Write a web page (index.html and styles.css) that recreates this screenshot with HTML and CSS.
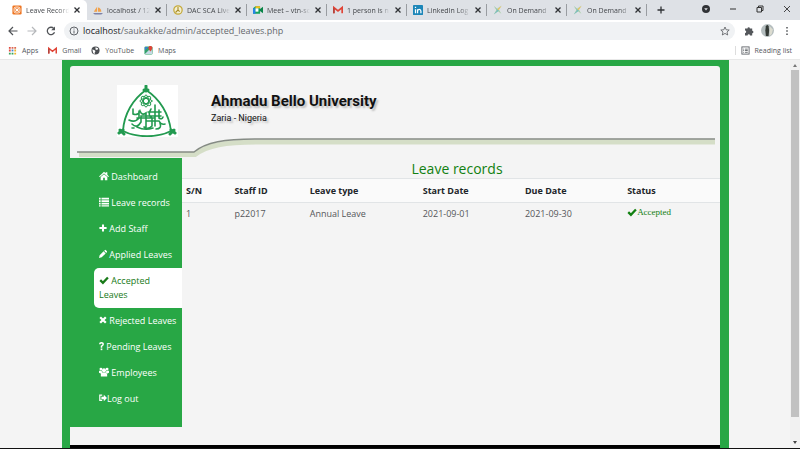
FILE: index.html
```html
<!DOCTYPE html>
<html lang="en">
<head>
<meta charset="utf-8">
<meta name="viewport" content="width=device-width, initial-scale=1">
<title>Leave Records</title>
<link rel="stylesheet" href="styles.css">
</head>
<body>
<svg class="defs" aria-hidden="true">
  <symbol id="x" viewBox="0 0 8 8"><path d="M1.500 1.500l5 5M6.500 1.500l-5 5" stroke="currentColor" stroke-width="1.300"/></symbol>
  <symbol id="check" viewBox="0 0 12 12"><path d="M1.500 6.200l3.200 3.200L10.700 3" fill="none" stroke="currentColor" stroke-width="2.700"/></symbol>
  <symbol id="gmail" viewBox="0 0 12 12"><path d="M1 10V3l5 4 5-4v7" fill="none" stroke="#e04436" stroke-width="2"/><path d="M1 4v6" stroke="#b4433c" stroke-width="2"/></symbol>
  <symbol id="star4" viewBox="0 0 12 12"><path d="M1 1l4 3.500 5-4-3 5 3 5-4-3-5 4 3-5.500z" fill="#a9cda5"/><path d="M5 5L10.500 1 7 6z" fill="#efc75e"/><path d="M1 2l4 4-4 5 6-4z" fill="#76bcc2"/></symbol>
</svg>
<div class="window">
  <header class="tabs">
    <div class="tab active"><svg class="fav" viewBox="0 0 12 12"><rect x=".5" y=".5" width="11" height="11" rx="1.500" fill="#ee7623"/><path d="M4 4l4 4M8 4L4 8" stroke="#fff" stroke-width="1.500"/><rect x="2.500" y="2.500" width="7" height="7" rx="2" fill="none" stroke="#fff"/></svg><span class="name">Leave Record</span><button aria-label="Close tab"><svg><use href="#x"/></svg></button></div>
    <div class="tab"><svg class="fav" viewBox="0 0 12 12"><path d="M1 8c1-2 3-5 4-6v6zM6 8V3c2 0 4 2 4 5z" fill="#f1a14a"/><path d="M0 9.500h12l-2 2H2z" fill="#7e83a8"/></svg><span class="name">localhost / 12</span><button aria-label="Close tab"><svg><use href="#x"/></svg></button></div>
    <div class="tab"><svg class="fav" viewBox="0 0 12 12"><circle cx="6" cy="6" r="5" fill="#f4efcf" stroke="#c4a93b" stroke-width="1.500"/><path d="M6 2.500V6l-3 3M6 6l2 2" fill="none" stroke="#a98c28" stroke-width="1.300"/></svg><span class="name">DAC SCA Live</span><button aria-label="Close tab"><svg><use href="#x"/></svg></button></div>
    <div class="tab"><svg class="fav" viewBox="0 0 12 12"><path d="M0 4l3-2.500h5.500v9H0z" fill="#15a35c"/><path d="M3 1.500h5.500V4H3z" fill="#f8bc17"/><path d="M0 4h3v6.500H0z" fill="#2684e8"/><path d="M3 4h3.500v4H3z" fill="#fff"/><path d="M8 5l4-3v8L8 7z" fill="#0a8548"/></svg><span class="name">Meet – vtn-sc</span><button aria-label="Close tab"><svg><use href="#x"/></svg></button></div>
    <div class="tab"><svg class="fav"><use href="#gmail"/></svg><span class="name">1 person is n</span><button aria-label="Close tab"><svg><use href="#x"/></svg></button></div>
    <div class="tab"><svg class="fav" viewBox="0 0 12 12"><rect width="12" height="12" rx="1" fill="#1c86b8"/><path d="M3 5v5M5.500 10V5M5.500 7.500c0-3 4-3 4 0V10M3 2v1.500" fill="none" stroke="#fff" stroke-width="1.500"/></svg><span class="name">LinkedIn Log</span><button aria-label="Close tab"><svg><use href="#x"/></svg></button></div>
    <div class="tab"><svg class="fav"><use href="#star4"/></svg><span class="name">On Demand</span><button aria-label="Close tab"><svg><use href="#x"/></svg></button></div>
    <div class="tab"><svg class="fav"><use href="#star4"/></svg><span class="name">On Demand</span><button aria-label="Close tab"><svg><use href="#x"/></svg></button></div>
    <button class="new-tab" aria-label="New tab"><svg viewBox="0 0 8 8"><path d="M4 .5v7M.5 4h7" stroke="currentColor" stroke-width="1.300"/></svg></button>
    <div class="controls">
      <button aria-label="Search tabs"><svg viewBox="0 0 8 8"><circle cx="4" cy="4" r="4" fill="#303236"/><path d="M2.200 3.200h3.600L4 5.500z" fill="#dee1e6"/></svg></button>
      <button aria-label="Minimise"><svg viewBox="0 0 8 8"><path d="M1 4h6" stroke="#333" stroke-width="1"/></svg></button>
      <button aria-label="Restore"><svg viewBox="0 0 8 8"><path d="M1 2.500h4.500V7H1zM2.500 2.500V1H7v4.500H5.500" fill="none" stroke="#333"/></svg></button>
      <button aria-label="Close"><svg viewBox="0 0 8 8"><path d="M1 1l6 6M7 1L1 7" stroke="#333" stroke-width=".9"/></svg></button>
    </div>
  </header>
  <div class="toolbar">
    <button aria-label="Back"><svg viewBox="0 0 10 10"><path d="M9.500 5h-8M5 1L1 5l4 4" fill="none" stroke="#505357" stroke-width="1.200"/></svg></button>
    <button aria-label="Forward"><svg viewBox="0 0 10 10"><path d="M.5 5h8M5 1l4 4-4 4" fill="none" stroke="#b6b8bb" stroke-width="1.200"/></svg></button>
    <button aria-label="Reload"><svg viewBox="0 0 10 10"><path d="M8.500 6.200A3.700 3.700 0 1 1 7.700 2.400" fill="none" stroke="#505357" stroke-width="1.300"/><path d="M9 .5v3.800H5.200z" fill="#505357"/></svg></button>
    <div class="address"><svg viewBox="0 0 10 10"><circle cx="5" cy="5" r="4" fill="none" stroke="#5f6368"/><path d="M5 4.500v3M5 2.500v1" stroke="#5f6368"/></svg><span class="url"><b>localhost</b>/saukakke/admin/accepted_leaves.php</span><svg viewBox="0 0 10 10"><path d="M5 1l1.200 2.800 3 .2L7 6l.7 3L5 7.400 2.300 9 3 6 .8 4l3-.2z" fill="none" stroke="#55585c" stroke-width=".8"/></svg></div>
    <button aria-label="Extensions"><svg viewBox="0 0 10 10"><path d="M1 2.500h2.500a1.200 1.200 0 1 1 2.400 0h2.300v2.300a1.200 1.200 0 1 1 0 2.400V9.500H6a1.200 1.200 0 1 0-2.400 0H1V7a1.200 1.200 0 1 0 0-2.400z" fill="#55585c"/></svg></button>
    <button class="avatar" aria-label="Profile"><svg viewBox="0 0 12 12"><circle cx="6" cy="6" r="6" fill="#b5bebf"/><path d="M4.500 2q1.500-2 2.500 0l.5 4-.5 5H4.500L4 6z" fill="#343a35"/><path d="M8 2l3 3-1 4-2 2z" fill="#dcdcd0"/></svg></button>
    <button aria-label="Menu"><svg viewBox="0 0 10 10"><path d="M5 1v1.600M5 4.200v1.600M5 7.400V9" stroke="#505357" stroke-width="1.500"/></svg></button>
  </div>
  <nav class="bookmarks" aria-label="Bookmarks">
    <a href="#"><svg viewBox="0 0 10 10"><path d="M1 2h2M1 5h2" stroke="#e1493d" stroke-width="2"/><path d="M4 2h2M7 2h2" stroke="#db6951" stroke-width="2"/><path d="M4 5h2" stroke="#4285d4" stroke-width="2"/><path d="M7 5h2M7 8.500h2" stroke="#f0b52d" stroke-width="2"/><path d="M1 8.500h2M4 8.500h2" stroke="#36a35b" stroke-width="2"/></svg>Apps</a>
    <a href="#"><svg><use href="#gmail"/></svg>Gmail</a>
    <a href="#"><svg viewBox="0 0 10 10"><circle cx="5" cy="5" r="4.500" fill="#4b4e52"/><path d="M1.500 4l2 .5 1.500 1-1 2 .5 1.500-2-1zM5 1.500l3 1-1 2-2-.5z" fill="#fff"/></svg>YouTube</a>
    <a href="#"><svg viewBox="0 0 10 10"><rect x=".5" y=".5" width="9" height="9" rx="1.500" fill="#35a16b"/><path d="M1 9l7-7 1.500 7z" fill="#c6d9e5"/><path d="M1 1h4L1 5z" fill="#3b7fd0"/><path d="M7 6C3.500 2 5 0 7 0s4 2 0 6" fill="#de4336"/></svg>Maps</a>
    <a class="reading" href="#"><svg viewBox="0 0 10 10"><rect x="1" y="1" width="8" height="8" fill="none" stroke="#5f6368"/><path d="M2.500 3.500h1M4.500 3.500h3M2.500 5h1M4.500 5h3M2.500 7h1M4.500 7h3" stroke="#5f6368"/></svg>Reading list</a>
  </nav>
  <div class="viewport">
    <main class="container">
      <div class="panel">
        <section class="banner">
          <svg class="swoosh" viewBox="0 0 650 92" preserveAspectRatio="none" aria-hidden="true">
            <path d="M9 88.500H125C137 79 156 76 186 76H645" fill="none" stroke="#d5dec7" stroke-width="5"/>
            <path d="M7 86H124C136 76 155 73 185 73H645" fill="none" stroke="#858b84" stroke-width="1.500"/>
          </svg>
          <svg class="crest" viewBox="0 0 61 52" role="img" aria-label="University crest">
            <g fill="none" stroke="#239a50" stroke-linecap="round">
              <path d="M29 5C16 14 7 29 6 46C20 53 40 53 54 46C52 29 43 14 29 5Z" stroke-width="1.800"/>
              <path d="M29 1v5M27 5h4M2 48l4-3M3 45l4 4M58 48l-4-3M57 45l-4 4" stroke-width="3"/>
              <g stroke-width="1"><ellipse cx="29" cy="16" rx="6" ry="2.500"/><ellipse cx="29" cy="16" rx="2.500" ry="6"/><ellipse cx="29" cy="16" rx="6" ry="2.500" transform="rotate(45 29 16)"/><ellipse cx="29" cy="16" rx="6" ry="2.500" transform="rotate(-45 29 16)"/></g>
              <path d="M16 24v5q5 2 7-3 2 5 6 2v14M12 35q6 3 10-2V26M15 39q5 5 9-2v-6h20M34 24q-4 6 1 9v8q-4 4-8 1M38 20v21M42 25v8q3 2 4-1M30 36h12q2 4 6 3M43 38q2 6-4 6M15 43h2M20 42q8 4 16 1M31 27h13M20 33h18" stroke-width="1.600"/>
            </g>
          </svg>
          <div class="brand"><h1>Ahmadu Bello University</h1><p>Zaria - Nigeria</p></div>
        </section>
        <div class="body">
          <nav class="side" aria-label="Main">
            <a href="#"><svg viewBox="0 0 12 12"><path d="M0 6.500L6 1l2 1.800V1.500h2v3L12 6.500l-1 .8L6 3 1 7.300z"/><path d="M2 7.300L6 4l4 3.300V11H7V8H5v3H2z"/></svg> Dashboard</a>
            <a href="#"><svg viewBox="0 0 12 12"><path d="M0 1h2v2H0zM3 1h9v2H3zM0 4h2v2H0zM3 4h9v2H3zM0 7h2v2H0zM3 7h9v2H3zM0 10h2v1.500H0zM3 10h9v1.500H3z"/></svg> Leave records</a>
            <a href="#"><svg class="slim" viewBox="0 0 10 12"><path d="M3.700 1.500h2.600v3.200h3.200v2.600H6.300v3.200H3.700V7.300H.5V4.700h3.200z"/></svg> Add Staff</a>
            <a href="#"><svg class="slim" viewBox="0 0 10 12"><path d="M0 11l.8-3.500L5.700 2.700l2.600 2.600-4.900 4.900zM6.400 2L8 .6 10.400 3 9 4.600z"/></svg> Applied Leaves</a>
            <a class="current" href="#" aria-current="page"><svg><use href="#check"/></svg> Accepted Leaves</a>
            <a href="#"><svg class="slim" viewBox="0 0 10 12"><path d="M1.500 2.500l7 7M8.500 2.500l-7 7" stroke="currentColor" stroke-width="2.800"/></svg> Rejected Leaves</a>
            <a href="#"><svg class="mini" viewBox="0 0 6 12"><path d="M1 4q0-2 2-2t2 1.800Q5 5 3 6.200V8" fill="none" stroke="currentColor" stroke-width="1.800"/><path d="M2 9h2v2H2z"/></svg> Pending Leaves</a>
            <a href="#"><svg viewBox="0 0 12 12"><circle cx="6" cy="4" r="2.500"/><circle cx="2.300" cy="2.500" r="1.700"/><circle cx="9.700" cy="2.500" r="1.700"/><path d="M0 7V4.500h3L4 6.500 2.500 8zM12 7V4.500H9L8 6.500 9.500 8zM2.200 11.500V9q0-2.500 2-2.500h3.600q2 0 2 2.500v2.500z"/></svg> Employees</a>
            <a href="#"><svg class="slim" viewBox="0 0 10 12"><path d="M4 2.500H1V9h3" fill="none" stroke="currentColor" stroke-width="1.500"/><path d="M3 4.500h3V2l4 4-4 4V7.500H3z"/></svg>Log out</a>
          </nav>
          <section class="content">
            <h2>Leave records</h2>
            <table>
              <thead><tr><th class="sn">S/N</th><th class="id">Staff ID</th><th class="type">Leave type</th><th class="date">Start Date</th><th class="date">Due Date</th><th>Status</th></tr></thead>
              <tbody><tr><td>1</td><td>p22017</td><td>Annual Leave</td><td>2021-09-01</td><td>2021-09-30</td><td class="status"><svg><use href="#check"/></svg>Accepted</td></tr></tbody>
            </table>
          </section>
        </div>
        <footer></footer>
      </div>
    </main>
    <div class="scroll" aria-hidden="true"><span class="up"></span><span class="thumb"></span><span class="down"></span></div>
  </div>
</div>
</body>
</html>
```
FILE: styles.css
```css
* { box-sizing: border-box; }
body { margin: 0; font-family: "Open Sans", "Noto Sans", sans-serif; font-size: 9px; color: #212529; background: #f4f4f4; }
h1, h2, p { margin: 0; }
a { color: inherit; text-decoration: none; }
button { border: 0; padding: 0; background: none; color: inherit; display: flex; align-items: center; justify-content: center; }
.defs { position: absolute; width: 0; height: 0; }
.window { display: flex; flex-direction: column; height: 100vh; overflow: hidden; border-bottom: 1px solid #111; }

.tabs { display: flex; flex: none; height: 20px; background: #dee1e6; color: #44474b; font: 7px "Open Sans", sans-serif; }
.tab { display: flex; align-items: center; flex: 0 1 80px; min-width: 0; padding: 0 5px 0 6px; gap: 4px; background: linear-gradient(#999ca1, #999ca1) right center / 1px 12px no-repeat; }
.tab.active { flex-basis: 87px; padding: 0 6px 0 12px; background: #fff; border-radius: 0 5px 0 0; }
.fav { width: 10px; height: 10px; flex: none; }
.name { flex: 1; min-width: 0; white-space: nowrap; -webkit-mask-image: linear-gradient(90deg, #000 75%, transparent); mask-image: linear-gradient(90deg, #000 75%, transparent); }
.tab button { flex: none; color: #303236; }
.tab button svg { width: 8px; height: 8px; }
.new-tab { width: 27px; color: #303236; }
.new-tab svg { width: 8px; height: 8px; }
.controls { display: flex; margin-left: auto; padding-bottom: 2px; }
.controls button { width: 27px; }
.controls svg { width: 8px; height: 8px; }

.toolbar { display: flex; align-items: center; flex: none; height: 21px; padding: 0 4px 0 3px; background: #fff; }
.toolbar button { width: 19px; }
.toolbar svg { width: 10px; height: 10px; flex: none; }
.toolbar .avatar svg { width: 13px; height: 13px; }
.address { display: flex; flex: 1; align-items: center; gap: 4px; height: 18px; margin: 0 4px; padding: 0 5px 0 5px; border-radius: 9px; background: #f0f2f4; color: #65686d; }
.url { flex: 1; }
.url b { font-weight: 400; color: #202124; }
.bookmarks { display: flex; align-items: center; flex: none; height: 19px; padding: 0 8px; gap: 10px; background: #fff; border-bottom: 1px solid #e8e8e8; color: #55585c; font: 7px "Open Sans", sans-serif; }
.bookmarks a { display: flex; align-items: center; gap: 5px; }
.bookmarks svg { width: 9px; height: 9px; }
.bookmarks .reading { margin-left: auto; padding-left: 5px; border-left: 1px solid #ddd; }

.viewport { display: flex; flex: 1; min-height: 0; }
.container { flex: 1; min-width: 0; margin: 0 61px 0 62px; padding: 6px 9px 0 8px; background: #28a745; }
.panel { display: flex; flex-direction: column; height: 100%; overflow: hidden; border-radius: 3px 3px 0 0; background: #f4f4f4; }
.banner { position: relative; display: flex; flex: none; height: 92px; padding: 19px 47px 0; gap: 33px; }
.swoosh { position: absolute; inset: 0; width: 100%; height: 100%; }
.crest { width: 61px; height: 52px; background: #fff; }
.brand { padding-top: 6px; color: #111; text-shadow: 2px 2px 2px #bbb; font-family: Roboto, "Liberation Sans", sans-serif; }
.brand h1 { font-size: 15px; font-weight: 700; line-height: 20px; }
.brand p { font-size: 9px; line-height: 14px; }

.body { display: flex; flex: 1; align-items: flex-start; }
.side { flex: none; width: 112px; padding: 6px 0 15px 24px; background: #28a745; color: #fff; }
.side a { display: block; padding: 6px 5px; line-height: 14px; }
.side svg { width: 10px; height: 10px; vertical-align: -1px; fill: currentColor; }
.side .slim { width: 8px; }
.side .mini { width: 5px; }
.side .current { border-radius: 5px 0 0 5px; background: #fff; color: #187a18; }
.content { flex: 1; min-width: 0; }
.content h2 { padding: 1px 0 0 12px; text-align: center; font-size: 14px; font-weight: 500; line-height: 19px; color: #118011; }
table { width: 100%; table-layout: fixed; border-collapse: collapse; line-height: 14px; }
th, td { padding: 4px; text-align: left; border-top: 1px solid #e1e4e6; }
th { padding-top: 5px; }
td { color: #54575a; }
thead tr { background: #fafafa; }
.sn { width: 9%; }
.id { width: 14%; }
.type { width: 21%; }
.date { width: 19%; }
.status { color: #118011; font-family: "Liberation Serif", serif; vertical-align: top; padding-top: 2px; }
.status svg { width: 10px; height: 10px; vertical-align: -2px; }
footer { flex: none; height: 3px; background: #000; }

.scroll { display: flex; flex-direction: column; align-items: center; flex: none; width: 10px; padding: 4px 0; gap: 3px; background: #f1f1f1; }
.thumb { width: 8px; height: 347px; background: #c1c1c1; }
.up, .down { border: 2px solid transparent; }
.up { border-top: 0; border-bottom: 3px solid #777; }
.down { margin-top: auto; border-bottom: 0; border-top: 3px solid #444; }
```
